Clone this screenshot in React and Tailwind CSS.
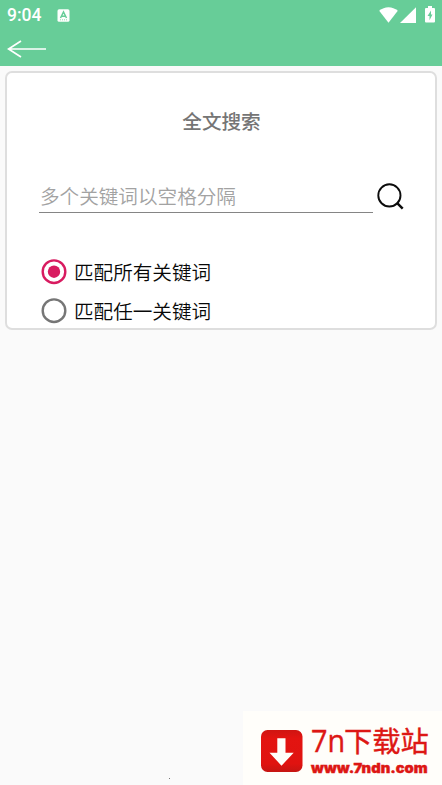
import { useState } from "react";

function StatusBar() {
  return (
    <div className="flex h-[31px] items-center pl-[7px] pr-[7px] text-white">
      <span className="w-[50px] font-[Roboto,sans-serif] text-[17.5px] leading-[31px] font-medium">9:04</span>
      <svg className="h-[13px] w-[13px]" viewBox="0 0 13 13">
        <rect x="0.5" y="0.3" width="12" height="12.5" rx="1.6" fill="#fdfffd" />
        <path d="M3.5 9 6.5 3 9.5 9M4.7 7.2h3.6" fill="none" stroke="#67cd98" strokeWidth="1.5" />
        <path d="M3 10.8h7" stroke="#67cd98" strokeWidth="0.7" strokeDasharray="1 1" />
      </svg>
      <div className="-mt-[2px] ml-auto flex items-center">
        <svg className="h-[16px] w-[19px]" viewBox="0 0 19 16">
          <path d="M0.2 3.8C5.5-.9 13.5-.9 18.8 3.8L9.5 15.7Z" fill="#fff" />
        </svg>
        <svg className="ml-[2px] h-[16px] w-[16px]" viewBox="0 0 16 16">
          <path d="M16 0.2V15.9H0Z" fill="#fff" />
        </svg>
        <svg className="ml-[9px] h-[17px] w-[10px]" viewBox="0 0 10 17">
          <path d="M3 0h4v2H9a1 1 0 0 1 1 1v12.500a1 1 0 0 1-1 1H1a1 1 0 0 1-1-1V3a1 1 0 0 1 1-1h2Z" fill="#fff" />
          <path d="M6 4.500 2.500 10h2v4.200L7.500 8.500H6Z" fill="#67cd98" />
        </svg>
      </div>
    </div>
  );
}

function Option({ label, checked, onSelect }) {
  return (
    <button type="button" role="radio" aria-checked={checked} onClick={onSelect} className="flex h-[39px] items-center">
      <svg className="h-[26px] w-[26px]" viewBox="0 0 26 26">
        <circle cx="13" cy="12.700" r="11.3" fill="none" stroke={checked ? "#d81b60" : "#767676"} strokeWidth="2.400" />
        {checked && <circle cx="13" cy="12.700" r="6.200" fill="#d81b60" />}
      </svg>
      <span className="-mt-[1px] ml-[7px] text-[19.6px] leading-[39px] font-[350] text-[#080808]">{label}</span>
    </button>
  );
}

function SiteMark() {
  return (
    <div className="flex h-[74px] w-[199px] bg-[#fffefa] pt-[19px] pl-[18px]">
      <svg className="h-[42px] w-[42px] shrink-0" viewBox="0 0 42 42">
        <defs>
          <linearGradient id="tile" x1="0" y1="0" x2="0" y2="1">
            <stop offset="0" stopColor="#cf1512" />
            <stop offset="0.2" stopColor="#e31411" />
            <stop offset="0.800" stopColor="#e01310" />
            <stop offset="1" stopColor="#c51512" />
          </linearGradient>
        </defs>
        <rect width="41.500" height="42" rx="6.500" fill="url(#tile)" />
        <path d="M16.300 8.300h8.200v14.500h8.200L20.500 35.700 8.500 22.800h7.800Z" fill="#fffefa" />
      </svg>
      <div className="ml-[8px] flex flex-col text-[#dd1714]">
        <span className="-mt-[8px] flex h-[36px] text-[28.3px] leading-[36px] whitespace-nowrap [-webkit-text-stroke:0.4px_#dd1714]">
          <span className="w-[33px] origin-left scale-x-[0.93] font-['Open_Sans',sans-serif] text-[31px]">7n</span>
          <span>下载站</span>
        </span>
        <span className="h-[20px] w-[108px] origin-left scale-x-[1.09] font-[Inter,sans-serif] text-[13.5px] leading-[20px] font-black whitespace-nowrap [-webkit-text-stroke:0.4px_#dd1714]">
          www.7ndn.com
        </span>
      </div>
    </div>
  );
}

export default function App() {
  const [mode, setMode] = useState("all");
  return (
    <div className="flex h-[785px] w-[442px] flex-col overflow-hidden bg-[#fafafa] font-['Noto_Sans_CJK_SC',sans-serif]">
      <header className="h-[66px] shrink-0 bg-[#67cd98]">
        <StatusBar />
        <button type="button" aria-label="返回" className="ml-[7px] block h-[35px]">
          <svg className="h-[35px] w-[40px]" viewBox="0 0 40 35">
            <path d="M14 10 1.500 18 14 26M1.500 18H39" fill="none" stroke="#fff" strokeWidth="1.700" />
          </svg>
        </button>
      </header>
      <main className="mx-[5px] mt-[5px] h-[259px] shrink-0 rounded-[7px] border-2 border-[#dedede] bg-white pr-[31px] pl-[32px]">
        <h1 className="mt-[34px] h-[28px] text-center text-[19.6px] leading-[28px] font-medium text-[#757575]">全文搜索</h1>
        <div className="mt-[46px] flex h-[34px] items-start">
          <input
            aria-label="关键词"
            placeholder="多个关键词以空格分隔"
            className="h-[32px] w-[334px] shrink-0 border-b border-[#858585] px-[1px] pb-[3px] text-[19.6px] leading-[28px] font-[350] outline-none placeholder:text-[#a2a2a2]"
          />
          <svg className="mt-[2px] ml-[4px] h-[29px] w-[29px] shrink-0" viewBox="0 0 29 29">
            <circle cx="12.400" cy="12.400" r="11.100" fill="none" stroke="#0c0c0c" strokeWidth="1.900" />
            <path d="m19.700 19.700 6 6" stroke="#0c0c0c" strokeWidth="2.500" />
          </svg>
        </div>
        <div role="radiogroup" className="mt-[37px] ml-[2px]">
          <Option label="匹配所有关键词" checked={mode === "all"} onSelect={() => setMode("all")} />
          <Option label="匹配任一关键词" checked={mode === "any"} onSelect={() => setMode("any")} />
        </div>
      </main>
      <footer className="mt-auto flex items-end">
        <span className="mb-[6px] ml-[169px] h-px w-px bg-[#777]" />
        <div className="ml-auto">
          <SiteMark />
        </div>
      </footer>
    </div>
  );
}
